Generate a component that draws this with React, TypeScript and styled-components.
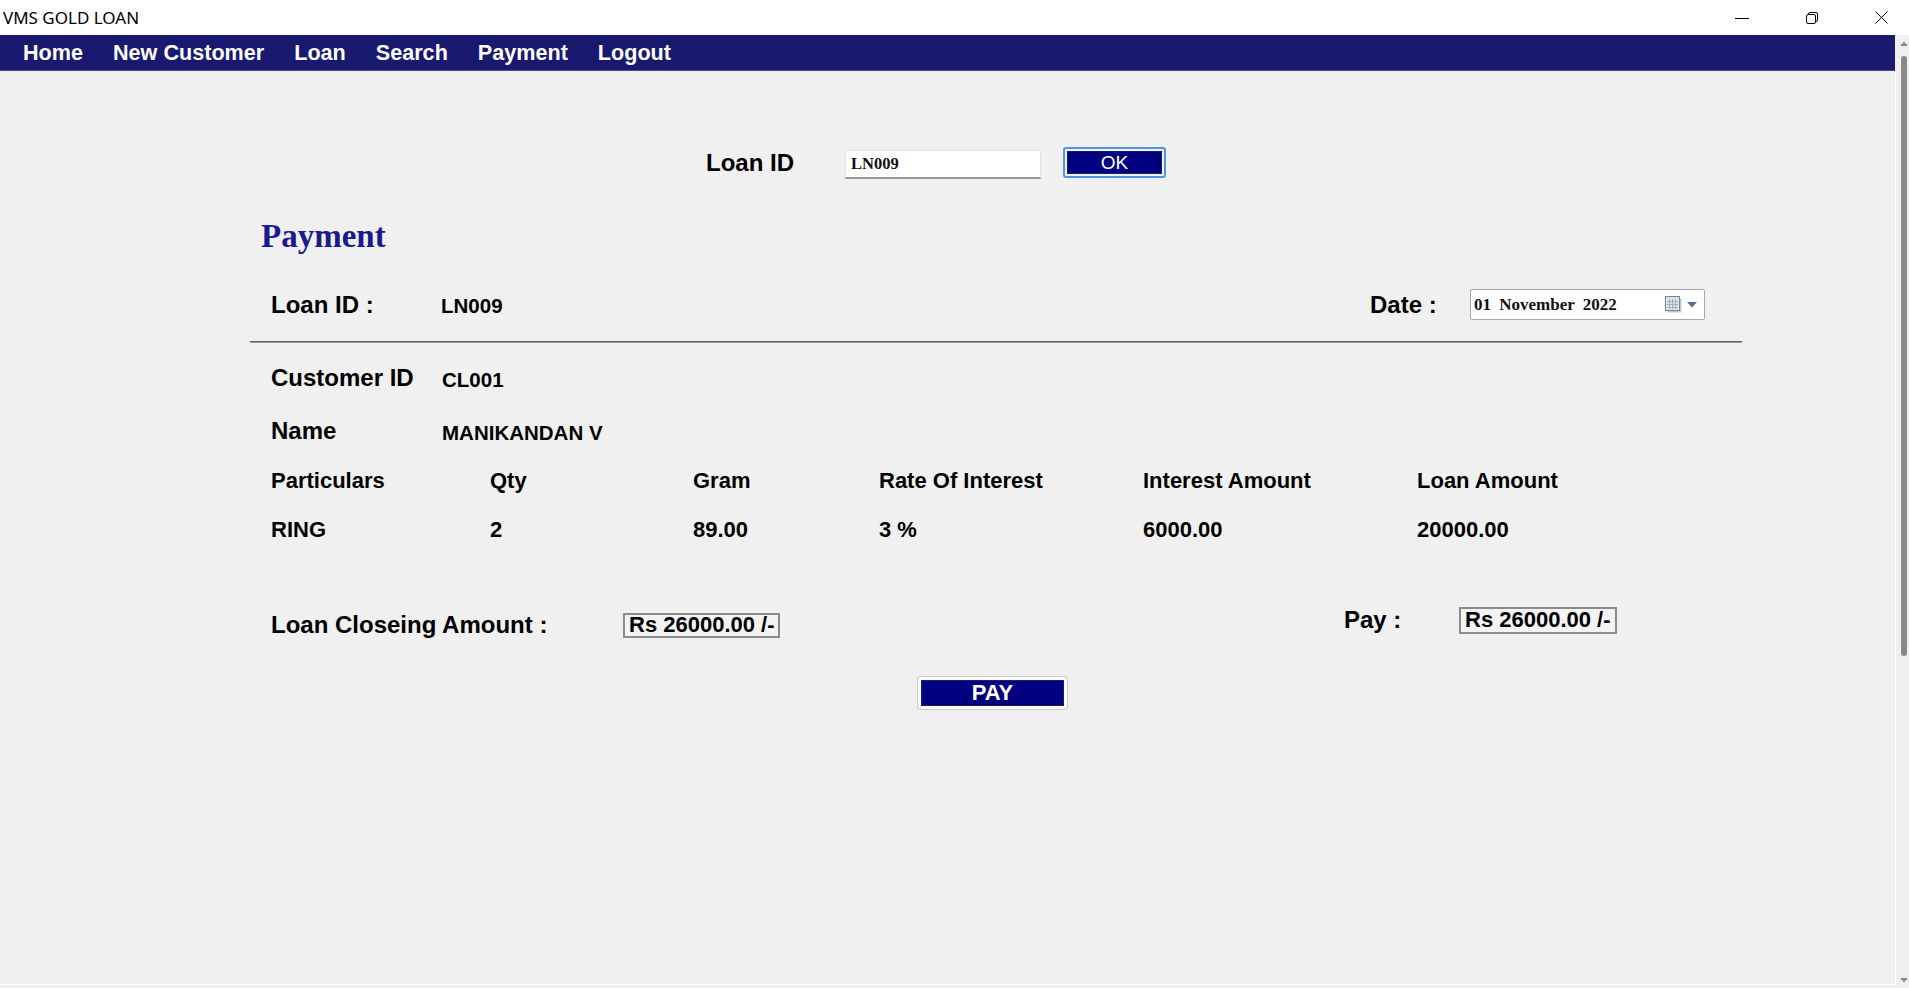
import React from "react";
import styled, { createGlobalStyle } from "styled-components";

const Global = createGlobalStyle`
  html, body { margin: 0; padding: 0; background: #f0f0f0; }
  body { font-family: "Liberation Sans", Arial, sans-serif; overflow: hidden; color: #000; }
  * { box-sizing: border-box; }
`;

const Window = styled.div`
  width: 1909px;
  height: 988px;
  display: flex;
  flex-direction: column;
  background: #f0f0f0;
`;

const TitleBar = styled.div`
  height: 35px;
  flex-shrink: 0;
  background: #ffffff;
  display: flex;
  align-items: center;
  justify-content: space-between;
`;

const Title = styled.div`
  font-family: "Noto Sans", "Open Sans", sans-serif;
  font-size: 17px;
  padding-left: 3px;
  color: #000;
`;

const Controls = styled.div`
  display: flex;
  align-items: center;
  gap: 57px;
  padding-right: 21px;
  height: 100%;
`;

const Main = styled.div`
  flex: 1;
  display: flex;
  min-height: 0;
`;

const LeftCol = styled.div`
  width: 1896px;
  display: flex;
  flex-direction: column;
`;

const Nav = styled.nav`
  height: 36px;
  flex-shrink: 0;
  background: #191970;
  border-bottom: 1px solid #4b4b94;
  margin-right: 1px;
  display: flex;
  align-items: center;
  gap: 30px;
  padding-left: 23px;
`;

const NavItem = styled.span`
  font-family: "Liberation Sans", Arial, sans-serif;
  font-weight: bold;
  font-size: 21.6px;
  color: #ffffff;
`;

const Body = styled.div`
  flex: 1;
  border-right: 1px solid #ffffff;
  border-bottom: 1px solid #ffffff;
  margin-bottom: 3px;
`;

const Scroll = styled.div`
  width: 13px;
  display: flex;
  flex-direction: column;
  align-items: center;
  padding: 6px 0 5px 3px;
`;

const Thumb = styled.div`
  width: 6px;
  height: 600px;
  margin-top: 10px;
  border-radius: 3px;
  background: #8a8a8a;
`;

const Spacer = styled.div`
  flex: 1;
`;

const Panel = styled.div`
  width: 1492px;
  margin-left: 250px;
  display: flex;
  flex-direction: column;
`;

const SearchRow = styled.div`
  margin-top: 75px;
  height: 33px;
  padding-left: 456px;
  display: flex;
  align-items: center;
`;

const SearchLabel = styled.span`
  width: 139px;
  font-weight: bold;
  font-size: 24px;
`;

const TextInput = styled.div`
  width: 196px;
  height: 29px;
  margin-top: 3px;
  background: #ffffff;
  border: 1px solid #e2e2e2;
  border-bottom: 2px solid #9a9a9a;
  padding-left: 5px;
  display: flex;
  align-items: center;
  font-family: "Liberation Serif", "Times New Roman", serif;
  font-weight: bold;
  font-size: 16.5px;
  color: #111;
`;

const BtnSlot = styled.div`
  margin-left: 22px;
`;

const Btn = styled.div<{ $focus?: boolean; $w: number; $h: number }>`
  width: ${(p) => p.$w}px;
  height: ${(p) => p.$h}px;
  border: ${(p) => (p.$focus ? "2px solid #4c95e6" : "1px solid #c9c9c9")};
  border-radius: 3px;
  background: ${(p) => (p.$focus ? "#eef4fb" : "#fbfbfb")};
  padding: ${(p) => (p.$focus ? "2px" : "3px")};
  display: flex;
`;

const BtnFill = styled.div<{ $bold?: boolean; $size: number }>`
  flex: 1;
  background: #000080;
  border: 1px solid #1c1c6a;
  color: #ffffff;
  display: flex;
  align-items: center;
  justify-content: center;
  font-family: "Liberation Sans", Arial, sans-serif;
  font-weight: ${(p) => (p.$bold ? "bold" : "normal")};
  font-size: ${(p) => p.$size}px;
`;

const Heading = styled.h1`
  margin: 38px 0 0 0;
  padding-left: 11px;
  font-family: "Liberation Serif", "Times New Roman", serif;
  font-weight: bold;
  font-size: 33px;
  line-height: 38px;
  color: #1a1a8e;
`;

const InfoRow = styled.div<{ $mt: number; $h: number }>`
  margin-top: ${(p) => p.$mt}px;
  height: ${(p) => p.$h}px;
  padding-left: 21px;
  display: flex;
  align-items: center;
`;

const SplitRow = styled.div<{ $mt: number; $h: number; $pr: number }>`
  margin-top: ${(p) => p.$mt}px;
  height: ${(p) => p.$h}px;
  padding-left: 21px;
  padding-right: ${(p) => p.$pr}px;
  display: flex;
  align-items: flex-start;
  justify-content: space-between;
`;

const Group = styled.div<{ $mt?: number }>`
  display: flex;
  align-items: center;
  margin-top: ${(p) => p.$mt || 0}px;
  height: 100%;
`;

const Label = styled.span<{ $w: number }>`
  width: ${(p) => p.$w}px;
  flex-shrink: 0;
  font-weight: bold;
  font-size: 24px;
`;

const Value = styled.span`
  font-weight: bold;
  font-size: 20.5px;
  padding-top: 3px;
`;

const DateBox = styled.div`
  width: 235px;
  height: 31px;
  background: #ffffff;
  border: 1px solid #a9a9a9;
  border-radius: 2px;
  display: flex;
  align-items: center;
  padding: 0 7px 0 3px;
  font-family: "Liberation Serif", "Times New Roman", serif;
  font-weight: bold;
  font-size: 17px;
  word-spacing: 4px;
  color: #111;
`;

const DateIcons = styled.div`
  margin-left: auto;
  display: flex;
  align-items: center;
  gap: 4px;
`;

const Divider = styled.div`
  margin-top: 21px;
  height: 2px;
  background: #666666;
  border-bottom: 1px solid #9a9a9a;
`;

const Table = styled.div`
  margin-top: 23px;
  padding-left: 21px;
  display: grid;
  grid-template-columns: 219px 203px 186px 264px 274px 1fr;
  row-gap: 25px;
`;

const Th = styled.div`
  font-weight: bold;
  font-size: 22px;
  line-height: 24px;
`;

const Td = styled.div`
  font-weight: bold;
  font-size: 22px;
  line-height: 24px;
`;

const AmountBox = styled.div<{ $w: number; $h: number }>`
  width: ${(p) => p.$w}px;
  height: ${(p) => p.$h}px;
  border: 2px solid #8c8c8c;
  background: #f3f3f3;
  padding-left: 4px;
  display: flex;
  align-items: center;
  font-weight: bold;
  font-size: 22px;
  white-space: nowrap;
  overflow: hidden;
`;

const PayWrap = styled.div`
  margin-top: 40px;
  margin-left: 667px;
`;

const MinIcon = () => (
  <svg width="14" height="14" viewBox="0 0 14 14">
    <line x1="0" y1="7.5" x2="14" y2="7.5" stroke="#000" strokeWidth="1" />
  </svg>
);

const RestoreIcon = () => (
  <svg width="12" height="12" viewBox="0 0 12 12" fill="none" stroke="#000" strokeWidth="1">
    <rect x="0.5" y="2.5" width="9" height="9" rx="1.5" />
    <path d="M2.5 2.5 V2 a1.5 1.5 0 0 1 1.5 -1.5 H10 a1.5 1.5 0 0 1 1.5 1.5 V8 a1.5 1.5 0 0 1 -1.5 1.5 H9.5" />
  </svg>
);

const CloseIcon = () => (
  <svg width="13" height="13" viewBox="0 0 13 13" stroke="#000" strokeWidth="1">
    <line x1="0.5" y1="0.5" x2="12.5" y2="12.5" />
    <line x1="12.5" y1="0.5" x2="0.5" y2="12.5" />
  </svg>
);

const CalendarIcon = () => (
  <svg width="18" height="18" viewBox="0 0 18 18">
    <rect x="2.5" y="2.5" width="14" height="14" fill="#7d828c" opacity="0.45" />
    <rect x="0.5" y="0.5" width="14" height="14" fill="#dfe2e8" stroke="#7f848e" />
    <g stroke="#a9aeb8" strokeWidth="1">
      <line x1="2" y1="5.5" x2="13" y2="5.5" />
      <line x1="2" y1="8.5" x2="13" y2="8.5" />
      <line x1="2" y1="11.5" x2="13" y2="11.5" />
      <line x1="4.5" y1="3" x2="4.5" y2="13" />
      <line x1="7.5" y1="3" x2="7.5" y2="13" />
      <line x1="10.5" y1="3" x2="10.5" y2="13" />
    </g>
  </svg>
);

const DropTri = () => (
  <svg width="10" height="6" viewBox="0 0 10 6">
    <path d="M0 0 H10 L5 5.5 Z" fill="#4f6f9c" />
  </svg>
);

const ScrollArrow = ({ up }: { up: boolean }) => (
  <svg width="8" height="5" viewBox="0 0 8 5">
    <path d={up ? "M0 5 L4 0.5 L8 5 Z" : "M0 0 L4 4.5 L8 0 Z"} fill="#8a8a8a" />
  </svg>
);

const navItems = ["Home", "New Customer", "Loan", "Search", "Payment", "Logout"];
const headers = ["Particulars", "Qty", "Gram", "Rate Of Interest", "Interest Amount", "Loan Amount"];
const values = ["RING", "2", "89.00", "3 %", "6000.00", "20000.00"];

export default function App() {
  return (
    <Window>
      <Global />
      <TitleBar>
        <Title>VMS GOLD LOAN</Title>
        <Controls>
          <MinIcon />
          <RestoreIcon />
          <CloseIcon />
        </Controls>
      </TitleBar>
      <Main>
        <LeftCol>
          <Nav>
            {navItems.map((n) => (
              <NavItem key={n}>{n}</NavItem>
            ))}
          </Nav>
          <Body>
            <Panel>
              <SearchRow>
                <SearchLabel>Loan ID</SearchLabel>
                <TextInput>LN009</TextInput>
                <BtnSlot>
                  <Btn $focus $w={103} $h={31}>
                    <BtnFill $size={19}>OK</BtnFill>
                  </Btn>
                </BtnSlot>
              </SearchRow>

              <Heading>Payment</Heading>

              <SplitRow $mt={34} $h={31} $pr={37}>
                <Group>
                  <Label $w={170}>Loan ID :</Label>
                  <Value>LN009</Value>
                </Group>
                <Group>
                  <Label $w={100}>Date :</Label>
                  <DateBox>
                    01 November 2022
                    <DateIcons>
                      <CalendarIcon />
                      <DropTri />
                    </DateIcons>
                  </DateBox>
                </Group>
              </SplitRow>

              <Divider />

              <InfoRow $mt={20} $h={30}>
                <Label $w={171}>Customer ID</Label>
                <Value>CL001</Value>
              </InfoRow>
              <InfoRow $mt={23} $h={30}>
                <Label $w={171}>Name</Label>
                <Value>MANIKANDAN V</Value>
              </InfoRow>

              <Table>
                {headers.map((h) => (
                  <Th key={h}>{h}</Th>
                ))}
                {values.map((v, i) => (
                  <Td key={i}>{v}</Td>
                ))}
              </Table>

              <SplitRow $mt={62} $h={32} $pr={125}>
                <Group $mt={5}>
                  <Label $w={352}>Loan Closeing Amount :</Label>
                  <AmountBox $w={157} $h={25}>Rs 26000.00 /-</AmountBox>
                </Group>
                <Group>
                  <Label $w={115}>Pay :</Label>
                  <AmountBox $w={158} $h={27}>Rs 26000.00 /-</AmountBox>
                </Group>
              </SplitRow>

              <PayWrap>
                <Btn $w={151} $h={34}>
                  <BtnFill $bold $size={22}>PAY</BtnFill>
                </Btn>
              </PayWrap>
            </Panel>
          </Body>
        </LeftCol>
        <Scroll>
          <ScrollArrow up />
          <Thumb />
          <Spacer />
          <ScrollArrow up={false} />
        </Scroll>
      </Main>
    </Window>
  );
}
